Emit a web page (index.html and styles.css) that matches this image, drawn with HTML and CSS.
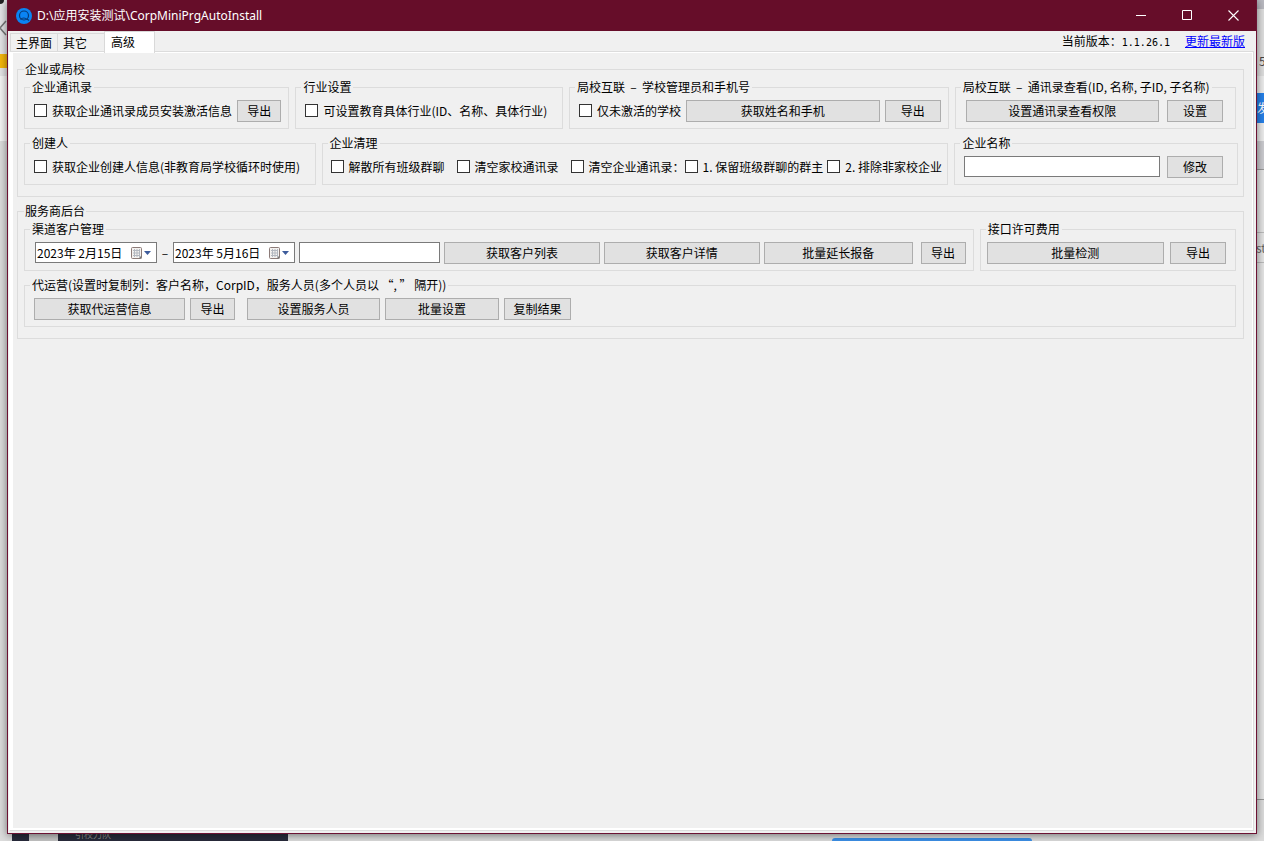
FILE: index.html
```
<!DOCTYPE html>
<html lang="zh-CN">
<head>
<meta charset="utf-8">
<title>CorpMiniPrgAutoInstall</title>
<link rel="stylesheet" href="styles.css">
</head>
<body>
<div class="desktop">
  <div class="backdrop" aria-hidden="true">
    <div class="left-top"></div>
    <svg class="left-chevron" width="7" height="16" viewBox="0 0 7 16"><path d="M6 1 0 8l6 7" fill="none" stroke="#777" stroke-width="1.5"/></svg>
    <div class="left-corner"></div>
    <div class="left-folder"></div>
    <div class="left-page"></div>
    <div class="right-top"></div>
    <div class="right-bar"></div>
    <span class="right-five">5</span>
    <div class="right-page"></div>
    <div class="right-blue">发</div>
    <div class="right-mid"></div>
    <div class="right-window"></div>
    <div class="right-field">st</div>
    <div class="bottom-dark"><span class="thumb"></span><span class="caption">引校刀队</span></div>
    <div class="bottom-pill"></div>
  </div>

  <main class="window">
    <header class="titlebar">
      <svg class="app-icon" width="16" height="16" viewBox="0 0 16 16"><circle cx="8" cy="8" r="8" fill="#0a84f4"/><circle cx="8" cy="7.5" r="4.5" fill="none" stroke="#073a78" stroke-width="1.2"/><path d="M4.5 11.5C6 9.5 9.5 9.5 11 11.5M11 11l2 1.5" fill="none" stroke="#073a78" stroke-width="1.2"/></svg>
      <h1 class="title">D:\应用安装测试\CorpMiniPrgAutoInstall</h1>
      <div class="caption-buttons">
        <button type="button" aria-label="最小化"><svg width="11" height="11" viewBox="0 0 11 11"><path d="M0 5.5h10" stroke="#fff"/></svg></button>
        <button type="button" aria-label="最大化"><svg width="11" height="11" viewBox="0 0 11 11"><path d="M.5.5h9v9h-9z" fill="none" stroke="#fff"/></svg></button>
        <button type="button" aria-label="关闭"><svg width="11" height="11" viewBox="0 0 11 11"><path d="M.5.5l10 10M10.5.5l-10 10" stroke="#fff" stroke-width="1.1"/></svg></button>
      </div>
    </header>

    <div class="tabstrip">
      <div class="tabs" role="tablist">
        <button type="button" role="tab" class="tab">主界面</button>
        <button type="button" role="tab" class="tab">其它</button>
        <button type="button" role="tab" class="tab active" aria-selected="true">高级</button>
      </div>
      <p class="version">当前版本：<span class="number">1.1.26.1</span></p>
      <a class="update" href="#">更新最新版</a>
    </div>

    <section class="page" role="tabpanel">
      <fieldset class="group outer">
        <legend>企业或局校</legend>
        <div class="row">
          <fieldset class="group w265">
            <legend>企业通讯录</legend>
            <div class="controls">
              <label class="check"><input type="checkbox">获取企业通讯录成员安装激活信息</label>
              <button type="button" class="btn small push">导出</button>
            </div>
          </fieldset>
          <fieldset class="group w267">
            <legend>行业设置</legend>
            <div class="controls">
              <label class="check"><input type="checkbox">可设置教育具体行业(ID、名称、具体行业)</label>
            </div>
          </fieldset>
          <fieldset class="group w380">
            <legend>局校互联&nbsp; – &nbsp;学校管理员和手机号</legend>
            <div class="controls">
              <label class="check"><input type="checkbox">仅未激活的学校</label>
              <button type="button" class="btn grow">获取姓名和手机</button>
              <button type="button" class="btn medium">导出</button>
            </div>
          </fieldset>
          <fieldset class="group w281">
            <legend>局校互联&nbsp; – &nbsp;通讯录查看(ID, 名称, 子ID, 子名称)</legend>
            <div class="controls roomy">
              <button type="button" class="btn grow">设置通讯录查看权限</button>
              <button type="button" class="btn medium">设置</button>
            </div>
          </fieldset>
        </div>
        <div class="row wide">
          <fieldset class="group w291">
            <legend>创建人</legend>
            <div class="controls">
              <label class="check"><input type="checkbox">获取企业创建人信息(非教育局学校循环时使用)</label>
            </div>
          </fieldset>
          <fieldset class="group w628">
            <legend>企业清理</legend>
            <div class="controls spread">
              <label class="check"><input type="checkbox">解散所有班级群聊</label>
              <label class="check"><input type="checkbox">清空家校通讯录</label>
              <div class="check-set">
                <label class="check"><input type="checkbox">清空企业通讯录：</label>
                <label class="check"><input type="checkbox">1. 保留班级群聊的群主</label>
                <label class="check second"><input type="checkbox">2. 排除非家校企业</label>
              </div>
            </div>
          </fieldset>
          <fieldset class="group w283">
            <legend>企业名称</legend>
            <div class="controls name-row">
              <input type="text" class="field grow" aria-label="企业名称">
              <button type="button" class="btn medium">修改</button>
            </div>
          </fieldset>
        </div>
      </fieldset>

      <fieldset class="group outer">
        <legend>服务商后台</legend>
        <div class="row">
          <fieldset class="group w950">
            <legend>渠道客户管理</legend>
            <div class="controls channel">
              <div class="date">
                <input type="text" value="2023年 2月15日" aria-label="开始日期">
                <button type="button" aria-label="选择开始日期"><svg width="22" height="14" viewBox="0 0 22 14"><rect x="1.5" y="1.5" width="10" height="11" rx="1" fill="#f4f2f0" stroke="#8c7b78"/><path d="M3 4.5h7M3 7h7M3 9.5h7M4.5 3v8M7 3v8M9.5 3v8" stroke="#b3b8c0"/><path d="M8.5 12.5l3-3v3z" fill="#777"/><path d="M14 5h7l-3.5 4z" fill="#3d5c9c"/></svg></button>
              </div>
              <span class="dash">–</span>
              <div class="date">
                <input type="text" value="2023年 5月16日" aria-label="结束日期">
                <button type="button" aria-label="选择结束日期"><svg width="22" height="14" viewBox="0 0 22 14"><rect x="1.5" y="1.5" width="10" height="11" rx="1" fill="#f4f2f0" stroke="#8c7b78"/><path d="M3 4.5h7M3 7h7M3 9.5h7M4.5 3v8M7 3v8M9.5 3v8" stroke="#b3b8c0"/><path d="M8.5 12.5l3-3v3z" fill="#777"/><path d="M14 5h7l-3.5 4z" fill="#3d5c9c"/></svg></button>
              </div>
              <input type="text" class="field customer" aria-label="客户名称">
              <button type="button" class="btn grow156">获取客户列表</button>
              <button type="button" class="btn grow156">获取客户详情</button>
              <button type="button" class="btn grow149">批量延长报备</button>
              <button type="button" class="btn small apart">导出</button>
            </div>
          </fieldset>
          <fieldset class="group w255">
            <legend>接口许可费用</legend>
            <div class="controls license">
              <button type="button" class="btn grow">批量检测</button>
              <button type="button" class="btn medium">导出</button>
            </div>
          </fieldset>
        </div>
        <div class="row">
          <fieldset class="group grow">
            <legend>代运营(设置时复制列：客户名称，CorpID，服务人员(多个人员以 “, ” 隔开))</legend>
            <div class="controls">
              <button type="button" class="btn b151">获取代运营信息</button>
              <button type="button" class="btn small">导出</button>
              <button type="button" class="btn b133">设置服务人员</button>
              <button type="button" class="btn b114">批量设置</button>
              <button type="button" class="btn b67">复制结果</button>
            </div>
          </fieldset>
        </div>
      </fieldset>
    </section>
  </main>
</div>
</body>
</html>
```
FILE: styles.css
```
* { box-sizing: border-box; }

body {
  margin: 0;
  color: #000;
  font: 12px/16px "Noto Sans CJK SC", sans-serif;
}

button, input { font: inherit; color: inherit; margin: 0; }
h1, p { margin: 0; }

.desktop {
  position: relative;
  display: flex;
  height: 100vh;
  padding: 0 7px 7px;
  overflow: hidden;
  background: #dcdcdc;
}

/* Other windows partly visible around the edges */
.backdrop > * { position: absolute; }
.left-top { left: 0; top: 0; width: 7px; height: 141px; background: #e4e4e6; }
.left-chevron { left: 0; top: 20px; }
.left-corner { left: 0; top: 0; width: 4px; height: 4px; border-radius: 0 0 4px; background: #222; }
.left-folder { left: 0; top: 54px; width: 7px; height: 14px; background: #f4b60c; }
.left-page { left: 0; top: 76px; width: 7px; height: 65px; background: #f4f4f4; }
.right-top { right: 0; top: 0; width: 7px; height: 9px; background: #b9b9c0; }
.right-bar { right: 0; top: 9px; width: 7px; height: 67px; background: #dedede; }
.right-five { right: 0; top: 53px; width: 5px; overflow: hidden; color: #444; }
.right-page { right: 0; top: 76px; width: 7px; height: 65px; background: #ececec; }
.right-blue { right: 0; top: 93px; width: 7px; height: 30px; overflow: hidden; background: #2680e8; color: #fff; line-height: 30px; }
.right-mid { right: 0; top: 141px; width: 7px; height: 28px; background: #cbcbcf; }
.right-window { right: 0; top: 169px; width: 7px; height: 631px; background: #e4e4e4; border: solid #999; border-width: 1px 0; }
.right-field { right: 0; top: 232px; width: 8px; height: 31px; overflow: hidden; border: solid #bbb; border-width: 1px 0; color: #666; line-height: 30px; }
.bottom-dark { left: 12px; bottom: 0; display: flex; width: 276px; height: 8px; overflow: hidden; background: #282b3b; }
.thumb { width: 29px; height: 8px; margin-left: 17px; background: #c4c4c4; }
.caption { margin: -6px 0 0 17px; color: #8a8a8a; font-size: 9px; }
.bottom-pill { left: 832px; bottom: 0; width: 200px; height: 3px; border-radius: 3px 3px 0 0; background: #3c90e8; }

.window {
  position: relative;
  display: flex;
  flex: 1;
  flex-direction: column;
  min-width: 0;
  border: 1px solid #6c1233;
  border-top: 0;
  background: #f0f0f0;
  box-shadow: 0 1px 8px rgba(0, 0, 0, .5);
}

.titlebar {
  display: flex;
  align-items: center;
  height: 31px;
  padding-left: 8px;
  background: #660d29;
  color: #fff;
}
.title {
  margin-left: 5px;
  font-family: "Noto Sans", "Noto Sans CJK SC", sans-serif;
  font-size: 12px;
  font-weight: 400;
}
.caption-buttons { display: flex; margin-left: auto; }
.caption-buttons button {
  display: flex;
  align-items: center;
  justify-content: center;
  width: 46px;
  height: 31px;
  padding: 0;
  border: 0;
  background: none;
}

.tabstrip { display: flex; height: 20px; padding: 0 11px 0 2px; }
.tabs { display: flex; align-items: flex-end; }
.tab {
  height: 18px;
  padding: 0 10px 0 5px;
  border: solid #d9d9d9;
  border-width: 1px 0 0 1px;
  background: #f0f0f0;
  line-height: 16px;
  white-space: nowrap;
}
.tab:first-child { padding-right: 5px; }
.tab:nth-child(2) { padding-right: 17px; }
.tab.active {
  z-index: 1;
  height: 22px;
  margin-bottom: -2px;
  padding: 0 19px 2px 6px;
  border-right-width: 1px;
  background: #fff;
  line-height: 18px;
}
.version { margin-left: auto; line-height: 20px; }
.number { font-family: "DejaVu Sans Mono", monospace; font-size: 10px; }
.update { margin-left: 15px; color: #00f; line-height: 20px; }

.page {
  display: flex;
  flex: 1;
  flex-direction: column;
  gap: 6px;
  margin: 0 2px 2px 1px;
  padding: 9px 9px 0 7px;
  border: 1px solid #dcdcdc;
  border-left-color: #fff;
  box-shadow: inset 3px 0 #fff, inset -1px -2px #fff, inset 0 1px #fff;
}

.group {
  min-width: 0;
  margin: 0;
  padding: 5px 0 7px;
  border: 1px solid #dcdcdc;
}
.group legend {
  margin-left: 5px;
  padding: 0 2px;
  white-space: nowrap;
}
.group.outer { padding: 2px 5px 11px 6px; }
.group.outer > legend { margin-left: 0; padding: 0 1px; }

.row { display: flex; gap: 6px; padding-right: 2px; }
.row.wide { padding-right: 0; }
.row + .row { margin-top: 6px; }

.w265 { flex: 265 1 0; }
.w267 { flex: 267 1 0; }
.w380 { flex: 380 1 0; }
.w281 { flex: 281 1 0; }
.w291 { flex: 291 1 0; }
.w628 { flex: 628 1 0; }
.w283 { flex: 283 1 0; }
.w950 { flex: 950 1 0; }
.w255 { flex: 255 1 0; }
.grow { flex: 1; min-width: 0; }
.grow156 { flex: 156 1 0; }
.grow149 { flex: 149 1 0; }

.controls {
  display: flex;
  align-items: center;
  gap: 5px;
  height: 21px;
  padding: 0 7px 0 9px;
}
.controls.roomy { gap: 8px; padding: 0 12px 0 10px; }
.controls.name-row { gap: 7px; padding: 0 14px 0 9px; }
.controls.channel { gap: 4px; padding-left: 10px; }
.controls.license { gap: 6px; padding: 0 9px 0 6px; }
.controls.spread { gap: 12px; padding-left: 8px; }
.push { margin-left: auto; }
.apart { margin-left: 4px; }

.check { display: flex; align-items: center; gap: 5px; white-space: nowrap; }
.check input {
  width: 13px;
  height: 13px;
  border: 1px solid #333;
  background: #fff;
  appearance: none;
}
.check input:checked { background: #333; }
.check-set { display: flex; }
.check.second { margin-left: 4px; }

.btn {
  height: 22px;
  padding: 0;
  border: 1px solid #adadad;
  background: #e1e1e1;
  line-height: 18px;
  white-space: nowrap;
}
.btn.small { width: 45px; }
.btn.medium { width: 56px; }
.b151 { width: 151px; }
.b133 { width: 133px; margin-left: 7px; }
.b114 { width: 114px; }
.b67 { width: 67px; }

.field {
  height: 21px;
  padding: 0 3px;
  border: 1px solid #7a7a7a;
  background: #fff;
}
.customer { width: 141px; }

.date {
  display: flex;
  align-items: center;
  width: 122px;
  height: 21px;
  border: 1px solid #7a7a7a;
  background: #fff;
}
.date input { flex: 1; min-width: 0; height: 18px; padding: 0 0 0 1px; border: 0; background: none; }
.date button { display: flex; padding: 0 4px 0 0; border: 0; background: none; }
.dash { width: 8px; text-align: center; }
```
